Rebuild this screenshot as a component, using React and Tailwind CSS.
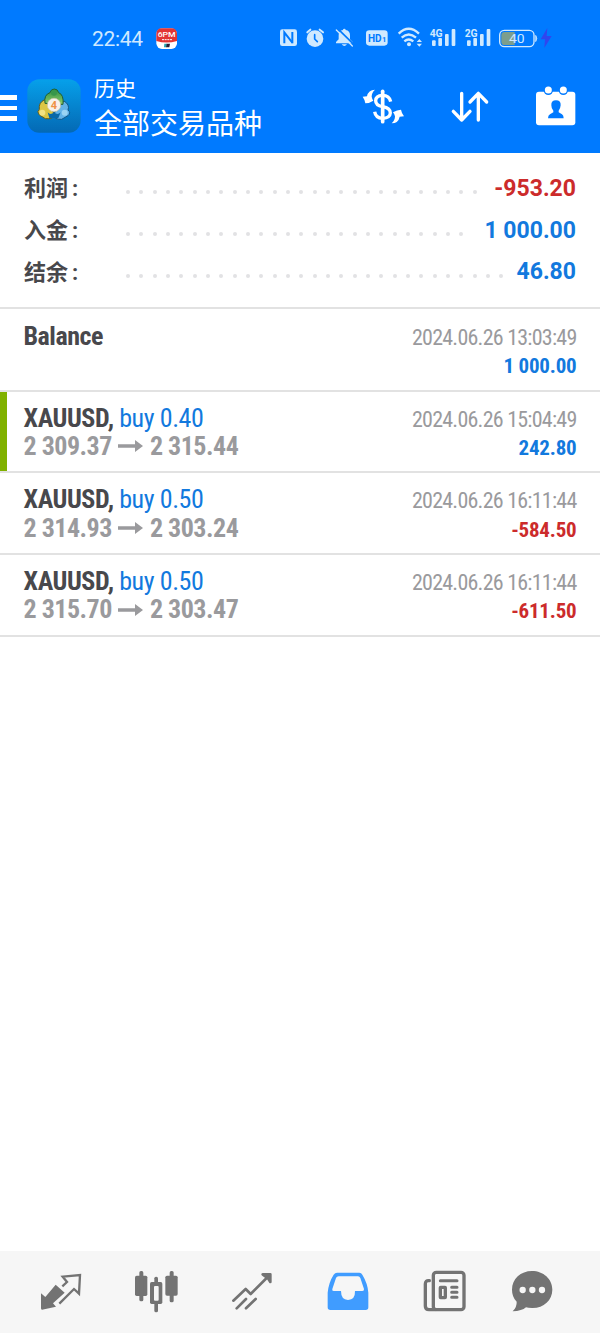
const summary = [
    { label: "利润", value: "-953.20", dots: 27, color: "text-[#cc2b2b]" },
    { label: "入金", value: "1 000.00", dots: 26, color: "text-[#1279de]" },
    { label: "结余", value: "46.80", dots: 29, color: "text-[#1279de]" },
]

const deals = [
    { symbol: "XAUUSD", side: "buy 0.40", open: "2 309.37", close: "2 315.44", time: "2024.06.26 15:04:49", profit: "242.80", takeProfit: true },
    { symbol: "XAUUSD", side: "buy 0.50", open: "2 314.93", close: "2 303.24", time: "2024.06.26 16:11:44", profit: "-584.50" },
    { symbol: "XAUUSD", side: "buy 0.50", open: "2 315.70", close: "2 303.47", time: "2024.06.26 16:11:44", profit: "-611.50" },
]

function SignalIcon({ label }) {
    return (
        <svg width="28" height="26" viewBox="87 21 84 78" fill="currentColor">
            <text x="89" y="50" fontSize="32" fontWeight="700" textLength="39" lengthAdjust="spacingAndGlyphs">{label}</text>
            <rect x="96" y="61" width="11" height="17" rx="3" />
            <rect x="115" y="54" width="11" height="24" rx="3" />
            <rect x="135" y="42" width="11" height="36" rx="3" />
            <rect x="155" y="27" width="11" height="51" rx="3" />
        </svg>
    )
}

function StatusBar() {
    return (
        <div className="flex h-[76px] pt-[27px] pl-[92px] text-[#cfe9ff] font-['Roboto',sans-serif]">
            <span className="w-16 text-[21px] leading-6 tracking-[-0.3px]">22:44</span>
            <svg width="22" height="24" viewBox="0 0 66 72" className="mr-[100px]">
                <rect x="1" y="4" width="62" height="62" rx="17" fill="#fff" />
                <path d="M1 42V21Q1 4 18 4H46Q63 4 63 21V42Q32 51 1 42Z" fill="#e23535" />
                <text x="5" y="31" fontSize="22" fontWeight="500" fill="#fff" textLength="54" lengthAdjust="spacingAndGlyphs">6PM</text>
                <path d="M18 38H48" stroke="#fff" strokeWidth="3" strokeDasharray="6 2" />
                <path d="M25 50H33L31 61H24Z" fill="#27a7b0" />
                <path d="M32 50H42L40 61H30Z" fill="#26203a" />
            </svg>
            <svg width="21" height="26" viewBox="24 21 63 78" fill="none" stroke="#007aff">
                <rect x="30" y="28" width="51" height="50" rx="7" fill="#cfe9ff" stroke="none" />
                <path d="M43 70V37L67 68" strokeWidth="6" />
                <path d="M67 36V70" strokeWidth="6" />
            </svg>
            <svg width="26" height="26" viewBox="96 21 78 78" fill="currentColor" className="ml-[3px]">
                <circle cx="135" cy="56" r="25" />
                <path d="M112 37L121 29M149 29L159 37" stroke="currentColor" strokeWidth="6" strokeLinecap="round" />
                <path d="M134 44V57L142 65" stroke="#007aff" strokeWidth="5" fill="none" strokeLinecap="round" />
            </svg>
            <svg width="26" height="26" viewBox="186 21 78 78" fill="currentColor" className="ml-1">
                <path d="M198 70V66L206 58V46Q206 31 219 30Q219 26 223 26Q227 26 227 30Q240 32 240 46V58L248 66V70Z" />
                <path d="M215 73H231Q223 83 215 73Z" />
                <path d="M203 26L252 74" stroke="#007aff" strokeWidth="5" />
                <path d="M199 30L247 78" stroke="currentColor" strokeWidth="4" strokeLinecap="round" />
            </svg>
            <svg width="26" height="26" viewBox="282 21 78 78" className="ml-1.5">
                <rect x="288" y="31" width="65" height="46" rx="10" fill="currentColor" />
                <text x="294" y="66" fontSize="34" fontWeight="700" fill="#007aff" textLength="41" lengthAdjust="spacingAndGlyphs">HD</text>
                <text x="336" y="66" fontSize="23" fontWeight="700" fill="#007aff">1</text>
            </svg>
            <svg width="28" height="26" viewBox="-12 21 84 78" fill="none" stroke="currentColor" strokeWidth="7" className="ml-1.5">
                <path d="M-4 41Q26 12 57 41" />
                <path d="M5 53Q26 34 48 53" />
                <path d="M13 64Q26 53 40 64" />
                <circle cx="27" cy="73" r="6" fill="currentColor" stroke="none" />
                <path d="M50 66L58 57L66 66ZM50 71L58 80L66 71Z" fill="currentColor" stroke="none" />
            </svg>
            <div className="ml-[5px] flex gap-[7px]">
                <SignalIcon label="4G" />
                <SignalIcon label="2G" />
            </div>
            <svg width="58" height="26" viewBox="291 21 174 78" className="ml-[5px]">
                <rect x="299" y="31" width="103" height="49" rx="14" fill="none" stroke="currentColor" strokeWidth="4" />
                <path d="M344 36V75H314Q304 75 304 65V46Q304 36 314 36Z" fill="#7c9e8d" />
                <path d="M407 46Q414 55 407 65Z" fill="currentColor" stroke="currentColor" strokeWidth="2" />
                <text x="327" y="69" fontSize="38" fill="currentColor" textLength="47" lengthAdjust="spacingAndGlyphs">40</text>
                <path d="M442 24L422 58H435L433 84L455 48H440Z" fill="#3046ee" />
            </svg>
        </div>
    )
}

function AppLogo() {
    return (
        <svg width="54" height="54" viewBox="79 29 162 162" className="ml-[9.5px]">
            <defs>
                <linearGradient id="tile" x1="0" y1="0" x2="0" y2="1">
                    <stop offset="0" stopColor="#06a0ea" />
                    <stop offset="1" stopColor="#0469b4" />
                </linearGradient>
                <linearGradient id="green" x1="0" y1="0" x2="0" y2="1">
                    <stop offset="0" stopColor="#2c8b42" />
                    <stop offset="1" stopColor="#8fce68" />
                </linearGradient>
            </defs>
            <rect x="80" y="30" width="160" height="160" rx="36" fill="url(#tile)" />
            <path d="M132 91Q113 100 116 120Q107 126 116 137L134 148Q158 151 161 134Z" fill="#dcc644" stroke="#625d20" strokeWidth="3" />
            <path d="M190 95Q208 106 202 122Q212 130 202 139L183 150Q160 151 157 136Z" fill="#63b2e8" stroke="#155785" strokeWidth="3" />
            <path d="M133 102Q129 76 148 70Q151 59 161 59Q171 59 174 70Q190 76 187 105Z" fill="url(#green)" stroke="#215f32" strokeWidth="3" />
            <path d="M141 129Q149 139 160 129Q171 139 180 129L173 146H146Z" fill="#0a68a8" />
            <circle cx="160" cy="70" r="9" fill="#37964a" />
            <circle cx="125" cy="130" r="9" fill="#f3e282" />
            <circle cx="192" cy="130" r="9" fill="#9bd3f3" />
            <circle cx="160" cy="107" r="20" fill="#f7f2ea" stroke="#cfc7a7" strokeWidth="2" />
            <text x="160" y="119" fontSize="33" fontWeight="700" textAnchor="middle" fill="#ef9146" className="font-['Roboto',sans-serif]">4</text>
        </svg>
    )
}

function Toolbar() {
    return (
        <div className="flex h-[77px] pt-[3px] pr-5 text-white">
            <div className="mt-4 flex w-[17px] flex-col gap-1.5">
                <span className="h-[4.5px] bg-white"></span>
                <span className="h-[4.5px] bg-white"></span>
                <span className="h-[4.5px] bg-white"></span>
            </div>
            <AppLogo />
            <div className="ml-[13.5px] -mt-[5px] flex-1 whitespace-nowrap">
                <p className="text-[21px] leading-[31px]">历史</p>
                <p className="mt-0.5 text-[28px] leading-9">全部交易品种</p>
            </div>
            <div className="flex gap-[39px] pt-[3px]">
                <svg width="48" height="48" viewBox="24 21 144 144" fill="none" stroke="currentColor" strokeWidth="10">
                    <path d="M98 49V140" strokeWidth="11" strokeLinecap="round" />
                    <path d="M122 80Q118 61 98 61Q77 62 77 77Q77 91 98 95Q121 99 121 114Q120 129 98 130Q77 129 74 110" />
                    <path d="M75 44Q55 44 51 64L38 65Q44 73 46 85Q58 85 70 77Q66 71 65 65Q65 53 75 44Z" fill="currentColor" stroke="none" />
                    <path d="M125 145Q145 145 149 125L162 124Q155 115 153 104Q141 105 129 112Q134 118 135 124Q135 136 125 145Z" fill="currentColor" stroke="none" />
                </svg>
                <svg width="48" height="48" viewBox="285 21 144 144" fill="none" stroke="currentColor" strokeWidth="10" strokeLinecap="round" strokeLinejoin="round">
                    <path d="M335 55V135M310 109L335 135L360 109" />
                    <path d="M385 135V55M360 81L385 55L410 81" />
                </svg>
                <svg width="48" height="48" viewBox="546 21 144 144" fill="currentColor">
                    <rect x="558" y="50" width="118" height="101" rx="9" />
                    <circle cx="595" cy="46" r="14" fill="#007aff" />
                    <circle cx="640" cy="46" r="14" fill="#007aff" />
                    <circle cx="595" cy="45" r="10.5" />
                    <circle cx="640" cy="45" r="10.5" />
                    <path d="M618 76Q633 76 632 91Q631 102 626 107V112L636 118Q641 121 641 130H594Q594 121 600 118L610 112V107Q604 102 604 91Q603 76 618 76Z" fill="#007aff" />
                </svg>
            </div>
        </div>
    )
}

function SummaryRow({ label, value, dots, color }) {
    return (
        <div className="flex h-[41.7px] items-center">
            <span className="w-[102px] text-[22px] font-bold text-[#48484c]">{label}<span className="ml-1">:</span></span>
            <div className="mt-[7px] flex gap-[9.33px]">
                {
                    Array.from({ length: dots }, (_, idx) => (
                        <span key={idx} className="size-1 rounded-full bg-[#e2e2e4]"></span>
                    ))
                }
            </div>
            <span className={`ml-auto pt-px font-['Roboto',sans-serif] text-[23px] font-bold ${color}`}>{value}</span>
        </div>
    )
}

function DealResult({ time, profit }) {
    return (
        <div className="pt-[2px] text-right leading-[28.5px]">
            <p className="text-[22px] tracking-[-0.76px] text-[#9a9a9d]">{time}</p>
            <p className={`text-[21px] font-bold tracking-[-0.2px] ${profit.startsWith("-") ? "text-[#cc2b2b]" : "text-[#1279de]"}`}>{profit}</p>
        </div>
    )
}

function DealRow({ deal }) {
    return (
        <div className="relative flex h-[81.7px] justify-between border-b-2 border-[#e2e2e2] px-[23.5px] pt-3">
            {deal.takeProfit && <span className="absolute inset-y-0 left-0 w-[7px] bg-[#80b100]"></span>}
            <div className="text-[26px] leading-[28.5px] tracking-[-0.42px]">
                <p className="font-bold text-[#48484c]">{deal.symbol}, <span className="font-normal text-[#1279de]">{deal.side}</span></p>
                <p className="flex items-center font-bold tracking-[-0.5px] text-[#9a9a9d]">
                    {deal.open}
                    <svg width="25" height="12" viewBox="0 0 25 12" fill="currentColor" className="mx-[6.5px]">
                        <path d="M0 4.3H17V0L25 6L17 12V7.7H0Z" />
                    </svg>
                    {deal.close}
                </p>
            </div>
            <DealResult time={deal.time} profit={deal.profit} />
        </div>
    )
}

function BottomNav() {
    return (
        <nav className="flex h-[82px] gap-12 bg-[#f6f6f6] pt-[17px] pl-[37px] text-[#737373]">
            <svg width="48" height="48" viewBox="51 84 144 144" fill="none" stroke="currentColor" strokeWidth="7">
                <path d="M107 134L134 158L99 190L108 200L66 209Q63 209 63 205V160L76 171Z" fill="currentColor" stroke="none" />
                <path d="M127 139L141 126L128 110L180 105L177 161L162 147L118 191" />
            </svg>
            <svg width="48" height="48" viewBox="339 84 144 144" fill="currentColor">
                <rect x="345" y="107" width="37" height="61" rx="5" />
                <rect x="358" y="93" width="12" height="91" rx="5" />
                <rect x="436" y="107" width="37" height="60" rx="5" />
                <rect x="449" y="93" width="12" height="94" rx="5" />
                <rect x="403" y="110" width="11" height="107" rx="5" />
                <rect x="390" y="126" width="37" height="66" rx="5" />
                <rect x="402" y="138" width="14" height="44" rx="3" fill="#f6f6f6" />
            </svg>
            <svg width="48" height="48" viewBox="57 84 144 144" fill="none" stroke="currentColor" strokeWidth="8" strokeLinecap="round" strokeLinejoin="round">
                <path d="M70 182L107 147L122 162L179 105" />
                <path d="M158 103H181V126L174 115Z" fill="currentColor" />
                <path d="M80 205L108 177M108 205L137 177" />
            </svg>
            <svg width="48" height="48" viewBox="342 84 144 144" className="-ml-px">
                <path d="M381 98H448Q454 98 457 104Q473 130 475 158V202Q475 210 467 210H361Q353 210 353 202V158Q356 127 371 104Q375 98 381 98Z" fill="#409cff" />
                <path d="M386 109H444Q449 109 451 114L462 147Q463 153 457 153H435Q436 179 414 180Q393 179 393 153H371Q365 153 367 147L378 114Q380 109 386 109Z" fill="#f6f6f6" />
            </svg>
            <svg width="48" height="48" viewBox="60 84 144 144" fill="none" stroke="currentColor" strokeWidth="10" strokeLinecap="round">
                <rect x="100" y="97" width="92" height="112" rx="9" />
                <path d="M88 122Q76 120 76 132V198Q76 209 87 209H105" />
                <path d="M121 122H171M155 142H171M155 157H171M155 172H171" strokeWidth="9" />
                <rect x="121" y="142" width="15" height="31" rx="1" />
            </svg>
            <svg width="48" height="48" viewBox="324 84 144 144" fill="currentColor" className="-ml-2">
                <path d="M396 93C430 93 457 117 457 149C457 181 430 205 396 204Q384 204 378 202Q366 213 338 214Q351 201 350 185Q336 171 336 149C336 117 362 93 396 93Z" />
                <circle cx="368" cy="150" r="9.5" fill="#f6f6f6" />
                <circle cx="397" cy="150" r="9.5" fill="#f6f6f6" />
                <circle cx="426" cy="150" r="9.5" fill="#f6f6f6" />
            </svg>
        </nav>
    )
}

function App() {
    return (
        <div className="flex h-[1333px] w-[600px] flex-col overflow-hidden bg-white font-['Roboto','Noto_Sans_CJK_SC',sans-serif]">
            <header className="h-[153px] bg-[#007aff]">
                <StatusBar />
                <Toolbar />
            </header>
            <section className="h-[155.5px] border-b-2 border-[#e2e2e2] px-6 pt-[15px]">
                {summary.map((row) => <SummaryRow key={row.label} {...row} />)}
            </section>
            <main className="flex-1 font-['Roboto_Condensed','Roboto',sans-serif] [font-stretch:75%]">
                <div className="flex h-[83px] justify-between border-b-2 border-[#e2e2e2] px-[23.5px] pt-[13.4px]">
                    <p className="text-[26px] leading-[28.5px] font-bold tracking-[-0.5px] text-[#48484c]">Balance</p>
                    <DealResult time="2024.06.26 13:03:49" profit="1 000.00" />
                </div>
                {deals.map((deal, idx) => <DealRow key={idx} deal={deal} />)}
            </main>
            <BottomNav />
        </div>
    )
}

export default App
